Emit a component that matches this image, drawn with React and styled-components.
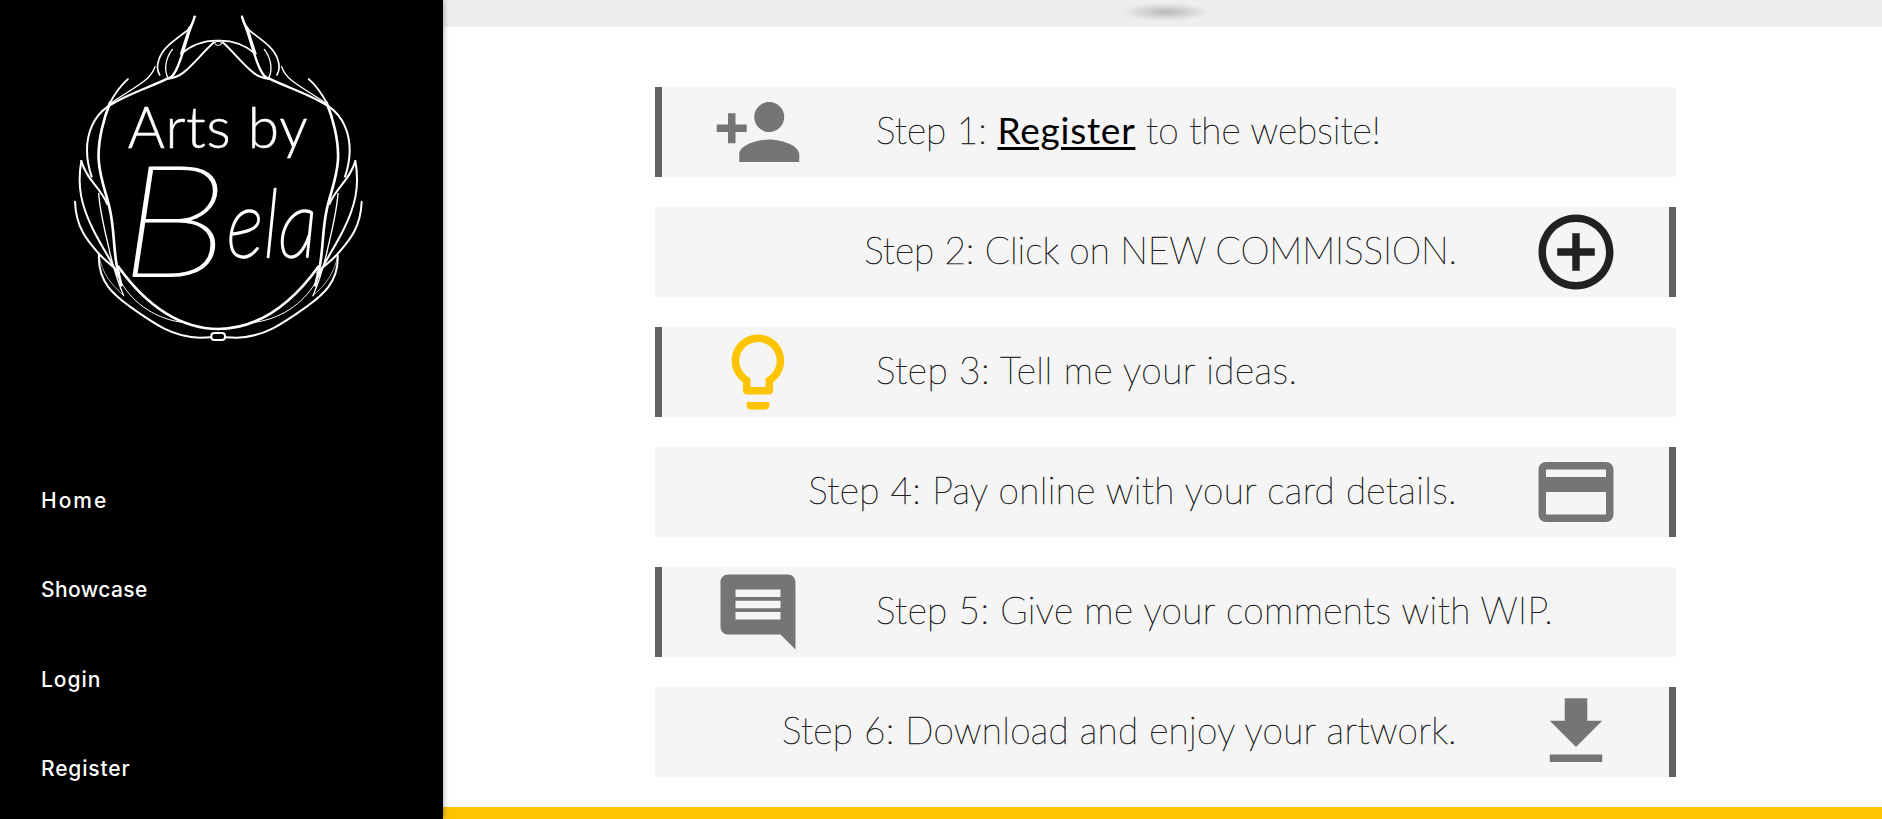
import React from "react";
import styled, { createGlobalStyle } from "styled-components";

const GlobalStyle = createGlobalStyle`
  * { box-sizing: border-box; }
  body { margin: 0; background: #fff; overflow: hidden; }
`;

const Page = styled.div`
  display: flex;
  height: 819px;
  overflow: hidden;
`;

const Sidebar = styled.aside`
  flex: 0 0 443px;
  background: #000;
  position: relative;
  z-index: 1;
  box-shadow: 0 0 6px rgba(0, 0, 0, 0.4);
`;

const Logo = styled.svg`
  display: block;
  width: 320px;
  height: 350px;
  margin-left: 60px;
  fill: none;
  stroke: #fff;
  stroke-width: 6;
  stroke-linecap: round;
  stroke-linejoin: round;
`;

const LogoText = styled.text`
  fill: #fff;
  stroke: #fff;
  stroke-width: ${(p) => p.$stroke || 0};
  font-family: Lato, "Open Sans", sans-serif;
  font-size: ${(p) => p.$size}px;
  font-style: ${(p) => (p.$italic ? "italic" : "normal")};
  font-weight: ${(p) => p.$weight || 300};
`;

const Nav = styled.nav`
  display: flex;
  flex-direction: column;
  padding: 106px 0 0 41px;
`;

const NavLink = styled.a`
  font: 500 21px/89.3px Inter, sans-serif;
  letter-spacing: ${(p) => p.$spacing}px;
  color: #fff;
`;

const Main = styled.main`
  flex: 1;
  display: flex;
  flex-direction: column;
`;

const Banner = styled.header`
  flex: 0 0 27px;
  background: #eee;
  display: flex;
  justify-content: center;
  padding: 3px 0 0 7px;
`;

const Shadow = styled.div`
  width: 90px;
  height: 18px;
  background: radial-gradient(closest-side, #b9b9b9, #eee);
`;

const Steps = styled.section`
  flex: 0 0 780px;
  display: flex;
  flex-direction: column;
  gap: 30px;
  padding: 60px 206px 0 212px;
`;

const Step = styled.article`
  display: flex;
  flex-direction: ${(p) => (p.$right ? "row-reverse" : "row")};
  height: 90px;
  background: #f5f5f5;
  border: 0 solid #616161;
  border-${(p) => (p.$right ? "right" : "left")}-width: 7px;
`;

const IconCell = styled.div`
  flex: 0 0 ${(p) => (p.$right ? 187 : 191)}px;
  display: flex;
  justify-content: center;
`;

const Icon = styled.svg`
  width: 90px;
  height: 90px;
  fill: ${(p) => p.$color};
`;

const Label = styled.p`
  margin: 0;
  padding: ${(p) => (p.$right ? "0 25px 0 0" : "0 0 0 23px")};
  font: 200 37px/85px Lato, "Open Sans", sans-serif;
  letter-spacing: ${(p) => p.$spacing}px;
  white-space: nowrap;
  color: #212121;
  -webkit-text-stroke: 0.6px #212121;
`;

const TextLink = styled.a`
  font-weight: 400;
  color: #000;
  letter-spacing: 0.75px;
  -webkit-text-stroke-width: 0;
  text-decoration: underline;
  text-decoration-thickness: 3px;
  text-underline-offset: 3px;
`;

const Band = styled.footer`
  flex: 0 0 12px;
  background: #ffc400;
`;

const GREY = "#757575";

const steps = [
  {
    text: (
      <>
        Step 1: <TextLink>Register</TextLink> to the website!
      </>
    ),
    color: GREY,
    spacing: 0.04,
    path: "M15 12c2.21 0 4-1.79 4-4s-1.79-4-4-4-4 1.79-4 4 1.79 4 4 4zm-9-2V7H4v3H1v2h3v3h2v-3h3v-2H6zm9 4c-2.67 0-8 1.34-8 4v2h16v-2c0-2.66-5.33-4-8-4z",
  },
  {
    text: "Step 2: Click on NEW COMMISSION.",
    color: "#212121",
    spacing: -0.08,
    path: "M13 7h-2v4H7v2h4v4h2v-4h4v-2h-4V7zm-1-5C6.48 2 2 6.48 2 12s4.48 10 10 10 10-4.48 10-10S17.52 2 12 2zm0 18c-4.41 0-8-3.59-8-8s3.59-8 8-8 8 3.59 8 8-3.59 8-8 8z",
  },
  {
    text: "Step 3: Tell me your ideas.",
    color: "#ffc400",
    spacing: 0.48,
    path: "M9 21c0 .55.45 1 1 1h4c.55 0 1-.45 1-1v-1H9v1zm3-19C8.14 2 5 5.14 5 9c0 2.38 1.19 4.47 3 5.74V17c0 .55.45 1 1 1h6c.55 0 1-.45 1-1v-2.26c1.81-1.27 3-3.36 3-5.74 0-3.86-3.14-7-7-7zm2.85 11.1l-.85.6V16h-4v-2.3l-.85-.6C7.8 12.16 7 10.63 7 9c0-2.76 2.24-5 5-5s5 2.24 5 5c0 1.63-.8 3.16-2.15 4.1z",
  },
  {
    text: "Step 4: Pay online with your card details.",
    color: GREY,
    spacing: 0.35,
    path: "M20 4H4c-1.11 0-1.99.89-1.99 2L2 18c0 1.11.89 2 2 2h16c1.11 0 2-.89 2-2V6c0-1.11-.89-2-2-2zm0 14H4v-6h16v6zm0-10H4V6h16v2z",
  },
  {
    text: "Step 5: Give me your comments with WIP.",
    color: GREY,
    spacing: 0.39,
    path: "M21.99 4c0-1.1-.89-2-1.99-2H4c-1.1 0-2 .9-2 2v12c0 1.1.9 2 2 2h14l4 4-.01-18zM18 14H6v-2h12v2zm0-3H6V9h12v2zm0-3H6V6h12v2z",
  },
  {
    text: "Step 6: Download and enjoy your artwork.",
    color: GREY,
    spacing: 0.28,
    path: "M19 9h-4V3H9v6H5l7 7 7-7zM5 18v2h14v-2H5z",
  },
];

const links = [
  ["Home", 2],
  ["Showcase", 0.4],
  ["Login", 0.95],
  ["Register", 0.85],
];

// One side of the wreath; the other side is its mirror image.
function WreathHalf() {
  return (
    <>
      <path d="M404 50Q396 77 380 93C330 130 306 148 297 178C289 200 292 213 299 225" strokeWidth="5" />
      <path d="M404 50C398 72 390 86 385 104C372 145 360 192 345 216Q338 230 327 235" strokeWidth="7" />
      <path d="M388 82L363 160" strokeWidth="5" />
      <path d="M337 148C316 175 311 213 325 235" strokeWidth="4" />
      <path d="M363 162C400 130 440 121 475 122" strokeWidth="5" />
      <path d="M462 127C430 155 400 195 370 218C350 234 335 235 322 236" />
      <path d="M322 236C270 262 200 282 143 320" strokeWidth="7" />
      <path d="M285 200C270 245 220 262 152 310" strokeWidth="4" />
      <path d="M204 237C180 258 162 285 148 312" strokeWidth="5" />
      <path d="M150 308C133 350 113 420 116 480C120 540 140 580 150 630C163 690 160 740 170 795L184 856" strokeWidth="8" />
      <path d="M143 320C100 350 81 400 81 450C81 490 88 510 95 530" />
      <path d="M64 483C80 540 120 560 142 612" />
      <path d="M64 483C50 560 65 620 100 690C130 750 160 790 175 830" />
      <path d="M45 605C48 690 90 730 120 765C145 790 160 800 178 818" />
      <path d="M116 580C120 640 137 700 150 760C161 805 175 850 191 887" strokeWidth="4" />
      <path d="M117 765C112 850 170 890 210 920C280 970 340 1012 420 1013L453 1012" strokeWidth="6" />
      <path d="M175 800C240 890 340 985 475 987" strokeWidth="8" />
      <path d="M117 765C125 820 155 855 191 887" strokeWidth="2" />
      <path d="M185 850C220 910 290 960 375 968" strokeWidth="3" />
    </>
  );
}

export default function App() {
  return (
    <>
      <GlobalStyle />
      <Page>
        <Sidebar>
          <Logo viewBox="0 0 960 1050" role="img" aria-label="Arts by Bela">
            <WreathHalf />
            <g transform="translate(950 0) scale(-1 1)">
              <WreathHalf />
            </g>
            <ellipse cx="475" cy="130" rx="10" ry="6" strokeWidth="3" />
            <rect x="454" y="999" width="41" height="21" rx="9" />
            <LogoText x="203" y="443" $size={170} $stroke={1.5} textLength="540">Arts by</LogoText>
            <LogoText x="180" y="829" $size={465} $weight={200} $stroke={6} $italic textLength="325" lengthAdjust="spacingAndGlyphs">B</LogoText>
            <LogoText x="500" y="772" $size={285} $weight={200} $stroke={7} $italic textLength="272" lengthAdjust="spacingAndGlyphs">ela</LogoText>
          </Logo>
          <Nav>
            {links.map(([name, spacing]) => (
              <NavLink key={name} $spacing={spacing}>{name}</NavLink>
            ))}
          </Nav>
        </Sidebar>
        <Main>
          <Banner><Shadow /></Banner>
          <Steps>
            {steps.map((s, i) => {
              const right = i % 2 === 1;
              return (
                <Step key={i} $right={right}>
                  <IconCell $right={right}>
                    <Icon viewBox="0 0 24 24" $color={s.color}><path d={s.path} /></Icon>
                  </IconCell>
                  <Label $right={right} $spacing={s.spacing}>{s.text}</Label>
                </Step>
              );
            })}
          </Steps>
          <Band />
        </Main>
      </Page>
    </>
  );
}
